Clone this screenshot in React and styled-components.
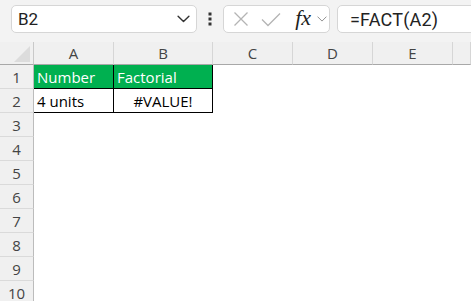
import React from "react";
import styled, { createGlobalStyle } from "styled-components";

const Global = createGlobalStyle`
  html, body { margin: 0; padding: 0; background: #ffffff; }
  body { font-family: "Open Sans", "Noto Sans", sans-serif; overflow: hidden; }
`;

const Page = styled.div`
  width: 471px;
  height: 301px;
  overflow: hidden;
  display: flex;
  flex-direction: column;
  background: #ffffff;
`;

const Toolbar = styled.div`
  height: 42px;
  flex: none;
  box-sizing: border-box;
  padding: 5px 0 0 11px;
  background: #f3f3f3;
  display: flex;
  align-items: flex-start;
  overflow: hidden;
`;

const Box = styled.div`
  box-sizing: border-box;
  height: 28px;
  background: #ffffff;
  border: 1px solid #d6d6d6;
  border-radius: 5px;
  display: flex;
  align-items: center;
`;

const NameBox = styled(Box)`
  width: 186px;
  padding: 0 6px 0 6px;
  justify-content: space-between;
  font-family: Roboto, "Open Sans", sans-serif;
  font-size: 17px;
  color: #222;
`;

const DotsWrap = styled.div`
  width: 26px;
  height: 28px;
  display: flex;
  align-items: center;
  justify-content: center;
`;

const ButtonsBox = styled(Box)`
  width: 107px;
  padding: 0 0 0 8px;
`;

const IconSlot = styled.div`
  width: ${(p) => p.$w}px;
  height: 26px;
  display: flex;
  align-items: center;
  justify-content: center;
  flex: none;
`;

const Fx = styled.span`
  font-family: "Liberation Serif", "DejaVu Serif", serif;
  font-style: italic;
  font-size: 22px;
  font-weight: 400;
  color: #1e1e1e;
  letter-spacing: -0.3px;
  line-height: 1;
  margin-top: -2px;
`;

const FormulaInput = styled(Box)`
  flex: 1;
  margin-left: 7px;
  margin-right: -8px;
  padding-left: 12px;
  font-family: Roboto, "Open Sans", sans-serif;
  font-size: 18px;
  letter-spacing: 0.2px;
  color: #222;
  border-radius: 5px 0 0 5px;
`;

const Grid = styled.div`
  display: grid;
  grid-template-columns: 34px 80px 99px 80px 80px 80px 1fr;
  grid-template-rows: 23px;
  grid-auto-rows: 24px;
  flex: none;
`;

const Corner = styled.div`
  background: #f0f0f0;
  box-sizing: border-box;
  border-right: 1px solid #c9c9c9;
  border-bottom: 1px solid #a8a8a8;
  display: flex;
  align-items: flex-end;
  justify-content: flex-end;
  padding: 0 3px 2px 0;
`;

const ColHead = styled.div`
  background: #f0f0f0;
  box-sizing: border-box;
  border-right: 1px solid #d6d6d6;
  border-bottom: 1px solid #a8a8a8;
  display: flex;
  align-items: center;
  justify-content: center;
  font-family: "Open Sans", sans-serif;
  font-size: 15px;
  color: #444;
`;

const RowHead = styled.div`
  background: #f0f0f0;
  box-sizing: border-box;
  border-right: 1px solid #bcbcbc;
  border-bottom: 1px solid #dadada;
  display: flex;
  align-items: center;
  justify-content: center;
  font-family: "Open Sans", sans-serif;
  font-size: 15px;
  color: #444;
`;

const Cell = styled.div`
  box-sizing: border-box;
  background: ${(p) => (p.$header ? "#00b050" : "#ffffff")};
  color: ${(p) => (p.$header ? "#ffffff" : "#000000")};
  border-right: 1px solid ${(p) => (p.$bordered ? "#000" : "transparent")};
  border-bottom: 1px solid ${(p) => (p.$bordered ? "#000" : "transparent")};
  display: flex;
  align-items: center;
  justify-content: ${(p) => (p.$align === "center" ? "center" : "flex-start")};
  padding: 0 3px;
  font-family: "Open Sans", sans-serif;
  font-size: 15px;
  white-space: nowrap;
  overflow: hidden;
`;

const Chevron = ({ size = 12, color = "#333", sw = 1.3 }) => (
  <svg width={size} height={size * 0.6} viewBox="0 0 12 7" fill="none">
    <path d="M1 1l5 5 5-5" stroke={color} strokeWidth={sw} strokeLinecap="round" strokeLinejoin="round" />
  </svg>
);

const Dots = () => (
  <svg width="4" height="14" viewBox="0 0 4 14">
    <rect x="0.5" y="0.5" width="3" height="3" fill="#333" />
    <rect x="0.5" y="5.5" width="3" height="3" fill="#333" />
    <rect x="0.5" y="10.5" width="3" height="3" fill="#333" />
  </svg>
);

const XIcon = () => (
  <svg width="16" height="16" viewBox="0 0 16 16" fill="none">
    <path d="M1.5 1.5l13 13M14.5 1.5l-13 13" stroke="#b4b4b4" strokeWidth="1.3" />
  </svg>
);

const CheckIcon = () => (
  <svg width="20" height="15" viewBox="0 0 20 15" fill="none">
    <path d="M1 7.5l6 6L19 1.5" stroke="#b4b4b4" strokeWidth="1.3" />
  </svg>
);

const CornerTri = () => (
  <svg width="16" height="16" viewBox="0 0 16 16">
    <path d="M16 0L16 16L0 16Z" fill="#dcdcdc" />
  </svg>
);

const columns = ["A", "B", "C", "D", "E", ""];
const data = {
  1: [
    { v: "Number", header: true, bordered: true },
    { v: "Factorial", header: true, bordered: true },
  ],
  2: [
    { v: "4 units", bordered: true },
    { v: "#VALUE!", bordered: true, align: "center" },
  ],
};

export default function App() {
  const rows = Array.from({ length: 10 }, (_, i) => i + 1);
  return (
    <Page>
      <Global />
      <Toolbar>
        <NameBox>
          <span>B2</span>
          <Chevron size={13} />
        </NameBox>
        <DotsWrap>
          <Dots />
        </DotsWrap>
        <ButtonsBox>
          <IconSlot $w={18}>
            <XIcon />
          </IconSlot>
          <IconSlot $w={10} />
          <IconSlot $w={22}>
            <CheckIcon />
          </IconSlot>
          <IconSlot $w={8} />
          <IconSlot $w={26}>
            <Fx>fx</Fx>
          </IconSlot>
          <IconSlot $w={12}>
            <Chevron size={10} color="#888" sw={1.1} />
          </IconSlot>
        </ButtonsBox>
        <FormulaInput>=FACT(A2)</FormulaInput>
      </Toolbar>
      <Grid>
        <Corner>
          <CornerTri />
        </Corner>
        {columns.map((c, i) => (
          <ColHead key={i}>{c}</ColHead>
        ))}
        {rows.map((r) => (
          <React.Fragment key={r}>
            <RowHead>{r}</RowHead>
            {columns.map((c, i) => {
              const d = data[r] && data[r][i];
              return d ? (
                <Cell key={i} $header={d.header} $bordered={d.bordered} $align={d.align}>
                  {d.v}
                </Cell>
              ) : (
                <Cell key={i} />
              );
            })}
          </React.Fragment>
        ))}
      </Grid>
    </Page>
  );
}
